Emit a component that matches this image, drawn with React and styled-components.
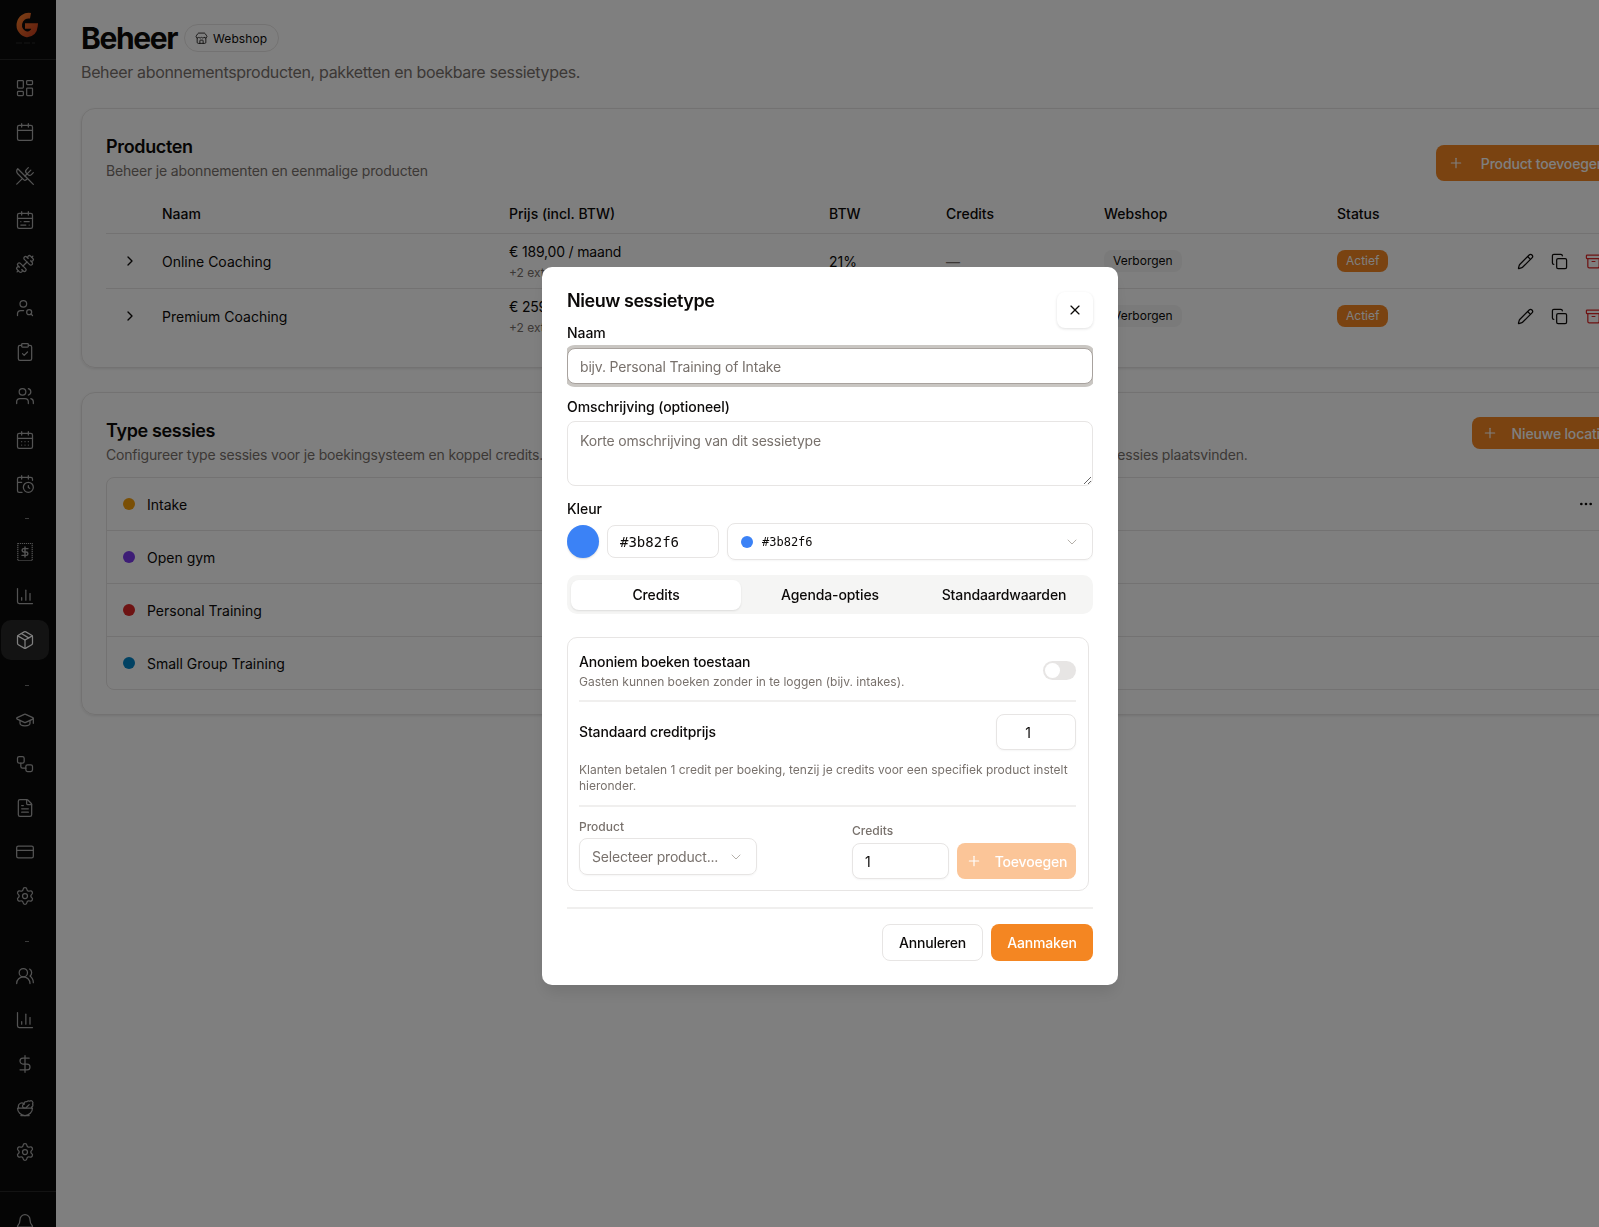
import React from "react"
import styled, { createGlobalStyle } from "styled-components"
import {
  Archive,
  Bell,
  CalendarClock,
  CalendarDays,
  CalendarRange,
  Calendar,
  ChartColumn,
  ChevronDown,
  ChevronRight,
  ClipboardCheck,
  Copy,
  CreditCard,
  DollarSign,
  Dumbbell,
  Ellipsis,
  FileText,
  GraduationCap,
  LayoutDashboard,
  Package,
  Pencil,
  Plus,
  Salad,
  Settings,
  Store,
  UserSearch,
  Users,
  UsersRound,
  UtensilsCrossed,
  Workflow,
  X,
} from "lucide-react"

const GlobalStyle = createGlobalStyle`
  html, body {
    margin: 0;
    height: 100%;
    overflow: hidden;
    background: #fff;
  }
  * { box-sizing: border-box; }
  body {
    font-family: Inter, "Liberation Sans", sans-serif;
    color: #0c0a09;
  }
`

const Page = styled.div`
  display: flex;
  height: 1227px;
  overflow: hidden;
`

const Sidebar = styled.aside`
  flex: 0 0 56px;
  display: flex;
  flex-direction: column;
  background: #0a0a0a;
  color: #a8a8a8;
`

const LogoRow = styled.div`
  height: 60px;
  padding: 10px 0 0 10px;
  border-bottom: 1px solid #262626;
`

const Nav = styled.nav`
  flex: 1;
  display: flex;
  flex-direction: column;
  gap: 4px;
  padding-top: 8px;
`

const NavItem = styled.div`
  width: 48px;
  height: 40px;
  margin-left: 1px;
  display: flex;
  align-items: center;
  justify-content: center;
  border-radius: 10px;
  background: ${(p) => (p.$active ? "#262626" : "transparent")};
  color: ${(p) => (p.$active ? "#fff" : "inherit")};
`

const NavSep = styled.div`
  height: ${(p) => (p.$tall ? "32px" : "20px")};
  display: flex;
  justify-content: center;
  align-items: ${(p) => (p.$tall ? "flex-end" : "center")};
  padding: ${(p) => (p.$tall ? "0 2px 10px 0" : "0 2px 0 0")};
  &::before {
    content: "";
    width: 4px;
    height: 1px;
    background: #777;
  }
`

const SideFooter = styled.div`
  height: 36px;
  flex: none;
  padding: 21px 0 0 15px;
  border-top: 1px solid #262626;
`

const Main = styled.main`
  flex: 1;
  min-width: 0;
  padding: 20px 0 0 25px;
  overflow: hidden;
`

const Content = styled.div`
  width: 1563px;
`

const TitleRow = styled.div`
  display: flex;
  align-items: center;
  gap: 7px;
  height: 36px;
`

const PageTitle = styled.h1`
  margin: 0;
  font-size: 30px;
  line-height: 36px;
  font-weight: 700;
  letter-spacing: -1.4px;
`

const Pill = styled.span`
  display: inline-flex;
  align-items: center;
  gap: 5px;
  height: 28px;
  padding: 0 11px 0 10px;
  border: 1px solid #e7e5e4;
  border-radius: 14px;
  font-size: 12px;
  font-weight: 400;
  letter-spacing: 0.1px;
`

const PageSub = styled.p`
  margin: 4px 0 24px;
  font-size: 16px;
  line-height: 24px;
  color: #78716c;
  letter-spacing: -0.34px;
`

const Card = styled.section`
  padding: 24px;
  margin-bottom: 24px;
  border: 1px solid #e7e5e4;
  border-radius: 14px;
  box-shadow: 0 1px 3px rgba(0, 0, 0, 0.1);
`

const CardHead = styled.div`
  display: flex;
  align-items: ${(p) => (p.$top ? "flex-start" : "flex-end")};
  justify-content: space-between;
`

const CardTitle = styled.h2`
  margin: 0;
  font-size: 18px;
  line-height: 28px;
  font-weight: 600;
  letter-spacing: -0.35px;
`

const CardSub = styled.p`
  margin: 0;
  font-size: 14px;
  line-height: 20px;
  color: #78716c;
  letter-spacing: -0.18px;
`

const SideNote = styled(CardSub)`
  margin: 28px 224px 0 auto;
`

const PrimaryButton = styled.button`
  display: inline-flex;
  align-items: center;
  justify-content: center;
  gap: ${(p) => (p.$small ? "14px" : "17px")};
  height: ${(p) => (p.$small ? "32px" : "36px")};
  padding: ${(p) => (p.$small ? "0 11px 0 10px" : "0 14px 0 12px")};
  border: 0;
  border-radius: 8px;
  background: #f48622;
  color: #fff;
  font: 500 14px Inter, sans-serif;
  letter-spacing: -0.17px;
  white-space: nowrap;
`

const TableRow = styled.div`
  display: grid;
  grid-template-columns: 56px 347px 320px 117px 158px 233px 170px 1fr;
  align-items: center;
  height: ${(p) => (p.$head ? "40px" : p.$last ? "54px" : "55px")};
  border-bottom: ${(p) => (p.$last ? "0" : "1px solid #e7e5e4")};
  font-size: 14px;
  font-weight: ${(p) => (p.$head ? 500 : 400)};
`

const TableHead = styled(TableRow)`
  margin-top: 13px;
`

const Expand = styled.span`
  display: flex;
  padding-left: 16px;
`

const Price = styled.div`
  line-height: 20px;
  letter-spacing: -0.18px;
`

const PriceNote = styled.div`
  margin-top: 3px;
  font-size: 12px;
  line-height: 16px;
  color: #78716c;
`

const EmptyValue = styled.span`
  color: #78716c;
`

const BadgeCell = styled.span`
  display: flex;
`

const Badge = styled.span`
  height: 22px;
  padding: 0 9px;
  border-radius: 8px;
  background: ${(p) => (p.$active ? "#f48622" : "#f5f5f4")};
  color: ${(p) => (p.$active ? "#fff" : "#0c0a09")};
  font-size: 12px;
  line-height: 22px;
`

const Actions = styled.div`
  display: flex;
  gap: 17px;
  padding-left: 10px;
`

const SessionList = styled.div`
  margin-top: 12px;
  border: 1px solid #e7e5e4;
  border-radius: 8px;
`

const SessionRow = styled.div`
  display: flex;
  align-items: center;
  gap: 12px;
  height: ${(p) => (p.$last ? "52px" : "53px")};
  padding: 0 24px 0 16px;
  border-bottom: ${(p) => (p.$last ? "0" : "1px solid #e7e5e4")};
  font-size: 14px;
`

const Dot = styled.span`
  flex: none;
  width: ${(p) => p.$size || 12}px;
  height: ${(p) => p.$size || 12}px;
  border-radius: 50%;
  background: ${(p) => p.$color};
`

const RowMenu = styled.span`
  display: flex;
  margin-left: auto;
`

const Overlay = styled.div`
  position: fixed;
  inset: 0;
  background: rgba(0, 0, 0, 0.5);
`

const Modal = styled.div`
  position: fixed;
  left: 542px;
  top: 267px;
  width: 576px;
  height: 718px;
  padding: 20px 25px 24px;
  background: #fff;
  border-radius: 10px;
  box-shadow: 0 10px 15px -3px rgba(0, 0, 0, 0.1);
  color: #0c0a09;
`

const ModalTitle = styled.h2`
  margin: 0 0 8px;
  font-size: 18px;
  line-height: 28px;
  font-weight: 600;
  letter-spacing: -0.45px;
`

const CloseButton = styled.button`
  position: absolute;
  top: 25px;
  right: 25px;
  width: 36px;
  height: 36px;
  display: flex;
  align-items: center;
  justify-content: center;
  padding: 0;
  border: 0;
  border-radius: 8px;
  background: #fff;
  color: #0c0a09;
  box-shadow: 0 1px 3px rgba(0, 0, 0, 0.12);
`

const FormClip = styled.div`
  overflow-x: clip;
`

const Label = styled.label`
  display: block;
  font-size: 14px;
  line-height: 20px;
  font-weight: 500;
  letter-spacing: -0.08px;
  margin: ${(p) => p.$mt || 0}px 0 ${(p) => p.$mb || 0}px;
`

const fieldStyles = `
  display: block;
  border: 1px solid #e7e5e4;
  border-radius: 8px;
  background: #fff;
  color: #0c0a09;
  font: 400 14px/20px Inter, sans-serif;
  letter-spacing: -0.18px;
  outline: 0;
  &::placeholder { color: #78716c; opacity: 1; }
`

const TextInput = styled.input`
  ${fieldStyles}
  width: 100%;
  height: 36px;
  padding: 0 12px;
  ${(p) => p.$focus && "box-shadow: 0 0 0 3px #c9c6c2; border-color: #a8a29e;"}
`

const TextArea = styled.textarea`
  ${fieldStyles}
  width: 100%;
  height: 65px;
  padding: 9px 12px;
  resize: vertical;
`

const ColorRow = styled.div`
  display: flex;
  align-items: center;
  gap: 8px;
  margin-top: 4px;
`

const Swatch = styled.span`
  flex: none;
  width: 32px;
  height: 33px;
  border-radius: 50%;
  background: #3b82f6;
  box-shadow: 0 1px 2px rgba(0, 0, 0, 0.15);
`

const HexInput = styled.input`
  ${fieldStyles}
  flex: none;
  width: 112px;
  height: 33px;
  padding: 0 12px;
  font-family: "DejaVu Sans Mono", monospace;
  letter-spacing: 0;
`

const SelectBox = styled.div`
  flex: ${(p) => (p.$grow ? 1 : "none")};
  width: ${(p) => (p.$grow ? "auto" : "178px")};
  height: 37px;
  display: flex;
  align-items: center;
  gap: ${(p) => (p.$grow ? "9px" : "8px")};
  padding: ${(p) => (p.$grow ? "0 12px 0 13px" : "0 12px")};
  border: 1px solid #e7e5e4;
  border-radius: 8px;
  box-shadow: 0 1px 2px rgba(0, 0, 0, 0.04);
  font-size: 14px;
  letter-spacing: -0.2px;
  color: #78716c;
`

const MonoValue = styled.span`
  font: 400 12px "DejaVu Sans Mono", monospace;
  letter-spacing: 0;
  color: #0c0a09;
  flex: 1;
`

const SelectText = styled.span`
  flex: 1;
  white-space: nowrap;
`

const Tabs = styled.div`
  display: grid;
  grid-template-columns: repeat(3, 1fr);
  gap: 4px;
  align-items: center;
  height: 39px;
  margin: 15px 0 23px;
  padding: 0 4px;
  border-radius: 10px;
  background: #f5f5f4;
`

const Tab = styled.div`
  height: 30px;
  display: flex;
  align-items: center;
  justify-content: center;
  border-radius: 8px;
  background: ${(p) => (p.$active ? "#fff" : "transparent")};
  box-shadow: ${(p) => (p.$active ? "0 1px 2px rgba(0,0,0,.1)" : "none")};
  font-size: 14px;
  font-weight: 500;
  letter-spacing: -0.12px;
`

const Panel = styled.div`
  height: 254px;
  margin-right: 4px;
  padding: 12px 12px 12px 11px;
  border: 1px solid #e7e5e4;
  border-radius: 10px;
`

const PanelRow = styled.div`
  display: flex;
  align-items: center;
  justify-content: space-between;
`

const ToggleRow = styled(PanelRow)`
  height: 52px;
  border-bottom: 2px solid #f0efee;
  padding-bottom: 9px;
`

const RowTitle = styled.div`
  font-size: 14px;
  line-height: 20px;
  font-weight: 500;
  letter-spacing: -0.13px;
`

const RowNote = styled.div`
  margin-top: 2px;
  font-size: 12px;
  line-height: 16px;
  color: #78716c;
`

const Toggle = styled.span`
  display: block;
  width: 33px;
  height: 19px;
  padding: 2px;
  border-radius: 10px;
  background: #e7e5e4;
  &::before {
    content: "";
    display: block;
    width: 15px;
    height: 15px;
    border-radius: 50%;
    background: #fff;
  }
`

const PriceRow = styled(PanelRow)`
  margin-top: 12px;
`

const NumberInput = styled.input`
  ${fieldStyles}
  height: 36px;
  width: ${(p) => (p.$wide ? "97px" : "80px")};
  padding: ${(p) => (p.$wide ? "0 12px" : "0 16px 0 0")};
  text-align: ${(p) => (p.$wide ? "left" : "center")};
  box-shadow: 0 1px 2px rgba(0, 0, 0, 0.04);
`

const HelpText = styled.p`
  margin: 12px 0 0;
  padding-bottom: 11px;
  border-bottom: 2px solid #f0efee;
  font-size: 12px;
  line-height: 16px;
  color: #78716c;
`

const AddRow = styled.div`
  display: flex;
  align-items: flex-end;
  margin-top: 12px;
`

const FieldStack = styled.div`
  display: flex;
  flex-direction: column;
  gap: ${(p) => p.$gap || 4}px;
  margin-right: ${(p) => p.$mr || 0}px;
  margin-bottom: ${(p) => p.$mb || 0}px;
`

const SmallLabel = styled.span`
  font-size: 12px;
  line-height: 16px;
  font-weight: 500;
  color: #78716c;
`

const AddButton = styled(PrimaryButton)`
  width: 120px;
  margin-left: 8px;
  padding: 0;
  gap: 13px;
  background: #fbc598;
`

const ModalFooter = styled.div`
  display: flex;
  justify-content: flex-end;
  gap: 8px;
  margin-top: 16px;
  padding-top: 15px;
  border-top: 2px solid #f0efee;
`

const GhostButton = styled.button`
  width: 101px;
  height: 37px;
  border: 1px solid #e7e5e4;
  border-radius: 8px;
  background: #fff;
  color: #0c0a09;
  font: 500 14px Inter, sans-serif;
  letter-spacing: -0.2px;
`

const SubmitButton = styled(PrimaryButton)`
  width: 102px;
  height: 37px;
  padding: 0;
`

function Logo() {
  return (
    <svg width="32" height="38" viewBox="0 0 32 38">
      <defs>
        <linearGradient id="logoFill" x1="0" y1="0" x2="1" y2="1">
          <stop offset="0" stopColor="#f47a2a" />
          <stop offset="1" stopColor="#c9401e" />
        </linearGradient>
      </defs>
      <path
        d="M20.5 5.8 A9.5 9.5 0 1 0 17 24.5 C21.5 24 24.5 21 25 16 L15 16"
        fill="none"
        stroke="url(#logoFill)"
        strokeWidth="5.5"
      />
      <path d="M6 33 H25" stroke="#2a2a2a" strokeWidth="1" strokeDasharray="6 2" />
    </svg>
  )
}

function ReceiptDollar(props) {
  return (
    <svg width="20" height="20" viewBox="0 0 20 20" fill="none" stroke="currentColor" {...props}>
      <rect x="2.8" y="1.5" width="14.4" height="17" strokeWidth="1.2" strokeDasharray="1.2 0.8" />
      <path
        d="M13 6.6 H8.8 a1.7 1.7 0 0 0 0 3.4 h2.4 a1.7 1.7 0 0 1 0 3.4 H7 M10 5 v10"
        strokeWidth="1.4"
        strokeLinecap="round"
      />
    </svg>
  )
}

const navIcons = {
  size: 20,
  strokeWidth: 1.5,
}

const navTop = [LayoutDashboard, Calendar, UtensilsCrossed, CalendarRange, Dumbbell, UserSearch, ClipboardCheck, Users, CalendarDays, CalendarClock]
const navMiddle = [ReceiptDollar, ChartColumn, Package]
const navLower = [GraduationCap, Workflow, FileText, CreditCard, Settings]
const navBottom = [UsersRound, ChartColumn, DollarSign, Salad, Settings]

const products = [
  { name: "Online Coaching", price: "€ 189,00 / maand" },
  { name: "Premium Coaching", price: "€ 259,00 / maand" },
]

const sessions = [
  { name: "Intake", color: "#f59e0b" },
  { name: "Open gym", color: "#7c3aed" },
  { name: "Personal Training", color: "#dc2626" },
  { name: "Small Group Training", color: "#0284c7" },
]

function NavGroup({ icons, activeIcon }) {
  return icons.map((Icon, i) => (
    <NavItem key={i} $active={Icon === activeIcon}>
      <Icon {...navIcons} />
    </NavItem>
  ))
}

export default function App() {
  return (
    <>
      <GlobalStyle />
      <Page>
        <Sidebar>
          <LogoRow>
            <Logo />
          </LogoRow>
          <Nav>
            <NavGroup icons={navTop} />
            <NavSep />
            <NavGroup icons={navMiddle} activeIcon={Package} />
            <NavSep $tall />
            <NavGroup icons={navLower} />
            <NavSep $tall />
            <NavGroup icons={navBottom} />
          </Nav>
          <SideFooter>
            <Bell size={20} strokeWidth={1.5} />
          </SideFooter>
        </Sidebar>
        <Main>
          <Content>
            <TitleRow>
              <PageTitle>Beheer</PageTitle>
              <Pill>
                <Store size={13} strokeWidth={1.5} />
                Webshop
              </Pill>
            </TitleRow>
            <PageSub>Beheer abonnementsproducten, pakketten en boekbare sessietypes.</PageSub>

            <Card>
              <CardHead>
                <div>
                  <CardTitle>Producten</CardTitle>
                  <CardSub>Beheer je abonnementen en eenmalige producten</CardSub>
                </div>
                <PrimaryButton>
                  <Plus size={16} strokeWidth={1.75} />
                  Product toevoegen
                </PrimaryButton>
              </CardHead>
              <TableHead $head>
                <span />
                <span>Naam</span>
                <span>Prijs (incl. BTW)</span>
                <span>BTW</span>
                <span>Credits</span>
                <span>Webshop</span>
                <span>Status</span>
              </TableHead>
              {products.map((product, i) => (
                <TableRow key={product.name} $last={i === products.length - 1}>
                  <Expand>
                    <ChevronRight size={16} />
                  </Expand>
                  <span>{product.name}</span>
                  <div>
                    <Price>{product.price}</Price>
                    <PriceNote>+2 extra prijzen</PriceNote>
                  </div>
                  <span>21%</span>
                  <EmptyValue>—</EmptyValue>
                  <BadgeCell>
                    <Badge>Verborgen</Badge>
                  </BadgeCell>
                  <BadgeCell>
                    <Badge $active>Actief</Badge>
                  </BadgeCell>
                  <Actions>
                    <Pencil size={17} strokeWidth={1.75} />
                    <Copy size={17} strokeWidth={1.75} />
                    <Archive size={17} strokeWidth={1.75} color="#dc2626" />
                  </Actions>
                </TableRow>
              ))}
            </Card>

            <Card>
              <CardHead $top>
                <div>
                  <CardTitle>Type sessies</CardTitle>
                  <CardSub>Configureer type sessies voor je boekingsysteem en koppel credits.</CardSub>
                </div>
                <SideNote>Beheer de locaties waar sessies plaatsvinden.</SideNote>
                <PrimaryButton $small>
                  <Plus size={16} strokeWidth={1.75} />
                  Nieuwe locatie
                </PrimaryButton>
              </CardHead>
              <SessionList>
                {sessions.map((session, i) => (
                  <SessionRow key={session.name} $last={i === sessions.length - 1}>
                    <Dot $color={session.color} />
                    {session.name}
                    {i === 0 && (
                      <RowMenu>
                        <Ellipsis size={16} />
                      </RowMenu>
                    )}
                  </SessionRow>
                ))}
              </SessionList>
            </Card>
          </Content>
        </Main>
      </Page>

      <Overlay />
      <Modal>
        <ModalTitle>Nieuw sessietype</ModalTitle>
        <CloseButton>
          <X size={16} strokeWidth={1.75} />
        </CloseButton>
        <FormClip>
          <Label $mb={5}>Naam</Label>
          <TextInput $focus readOnly placeholder="bijv. Personal Training of Intake" />
          <Label $mt={13} $mb={4}>
            Omschrijving (optioneel)
          </Label>
          <TextArea readOnly placeholder="Korte omschrijving van dit sessietype" />
          <Label $mt={13}>Kleur</Label>
          <ColorRow>
            <Swatch />
            <HexInput readOnly value="#3b82f6" />
            <SelectBox $grow>
              <Dot $color="#3b82f6" $size={12} />
              <MonoValue>#3b82f6</MonoValue>
              <ChevronDown size={16} strokeWidth={1.5} color="#b5b0aa" />
            </SelectBox>
          </ColorRow>
        </FormClip>
        <Tabs>
          <Tab $active>Credits</Tab>
          <Tab>Agenda-opties</Tab>
          <Tab>Standaardwaarden</Tab>
        </Tabs>
        <Panel>
          <ToggleRow>
            <div>
              <RowTitle>Anoniem boeken toestaan</RowTitle>
              <RowNote>Gasten kunnen boeken zonder in te loggen (bijv. intakes).</RowNote>
            </div>
            <Toggle />
          </ToggleRow>
          <PriceRow>
            <RowTitle>Standaard creditprijs</RowTitle>
            <NumberInput readOnly value="1" />
          </PriceRow>
          <HelpText>
            Klanten betalen 1 credit per boeking, tenzij je credits voor een specifiek product instelt hieronder.
          </HelpText>
          <AddRow>
            <FieldStack $mr={95} $mb={4} $gap={3}>
              <SmallLabel>Product</SmallLabel>
              <SelectBox>
                <SelectText>Selecteer product...</SelectText>
                <ChevronDown size={16} strokeWidth={1.5} color="#b5b0aa" />
              </SelectBox>
            </FieldStack>
            <FieldStack>
              <SmallLabel>Credits</SmallLabel>
              <NumberInput $wide readOnly value="1" />
            </FieldStack>
            <AddButton>
              <Plus size={16} strokeWidth={1.75} />
              Toevoegen
            </AddButton>
          </AddRow>
        </Panel>
        <ModalFooter>
          <GhostButton>Annuleren</GhostButton>
          <SubmitButton>Aanmaken</SubmitButton>
        </ModalFooter>
      </Modal>
    </>
  )
}
